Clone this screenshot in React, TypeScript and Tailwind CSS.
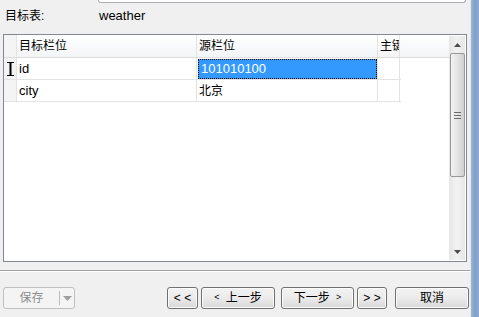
const cjk = { fontFamily: '"Liberation Sans", "Noto Sans CJK SC", sans-serif' };

function Btn({ children, className = '' }: { children: React.ReactNode; className?: string }) {
    return (
        <div
            className={`h-[22px] flex items-center justify-center rounded-[3px] border border-[#707070] bg-gradient-to-b from-[#f2f2f2] via-[#ebebeb] to-[#d8d8d8] text-[12px] text-black shadow-[inset_0_0_0_1px_#fcfcfc] ${className}`}
        >
            {children}
        </div>
    );
}

function Row({ id, src, first }: { id: string; src: string; first?: boolean }) {
    return (
        <div className="flex h-[22px] border-b border-[#e3e3e3]">
            <div className="w-[13px] bg-[#f4f4f4] border-r border-[#e3e3e3] flex items-center justify-center">
                {first && (
                    <svg width="7" height="14" viewBox="0 0 7 14">
                        <path d="M0 0.5h7M0 13.5h7" stroke="#000" strokeWidth="1" fill="none" />
                        <path d="M3.5 0v14" stroke="#000" strokeWidth="2" />
                    </svg>
                )}
            </div>
            <div className="w-[180px] border-r border-[#e3e3e3] flex items-center pl-[2px] text-[13px]">{id}</div>
            <div className="w-[181px] border-r border-[#e3e3e3] flex items-center">
                {first ? (
                    <div className="ml-px h-[20px] w-[179px] bg-[#3399ff] border border-dotted border-black flex items-center pl-[2px] text-white text-[13px]">
                        {src}
                    </div>
                ) : (
                    <span className="pl-[2px] text-[12px]">{src}</span>
                )}
            </div>
            <div className="w-[22px] border-r border-[#e3e3e3]"></div>
        </div>
    );
}

export default function App() {
    return (
        <div className="w-[479px] h-[317px] bg-[#f0f0f0] flex overflow-hidden" style={cjk}>
            <div className="w-[470px] flex flex-col">
                {/* bottom of the text box above */}
                <div className="ml-[98px] w-[368px] h-[3px] bg-white border border-t-0 border-[#abadb3] rounded-b-[3px]"></div>

                <div className="flex mt-[6px] h-[14px] items-center text-[12px]">
                    <span className="pl-[5px] w-[99px]">目标表:</span>
                    <span className="text-[13px]">weather</span>
                </div>

                {/* mapping grid */}
                <div className="mt-[11px] ml-[3px] w-[464px] h-[228px] border border-[#828790] bg-white flex">
                    <div className="flex-1 flex flex-col">
                        <div className="flex h-[23px] bg-gradient-to-b from-white to-[#f3f4f6] border-b border-[#dcdcdc] text-[12px]">
                            <div className="w-[13px] border-r border-[#e3e3e3] bg-[#f4f4f4]"></div>
                            <div className="w-[180px] border-r border-[#e3e3e3] flex items-center pl-[2px]">目标栏位</div>
                            <div className="w-[181px] border-r border-[#e3e3e3] flex items-center pl-[2px]">源栏位</div>
                            <div className="w-[22px] border-r border-[#e3e3e3] flex items-center pl-[2px] overflow-hidden whitespace-nowrap">主键</div>
                        </div>
                        <div className="w-[397px]">
                            <Row id="id" src="101010100" first />
                            <Row id="city" src="北京" />
                        </div>
                    </div>
                    {/* vertical scrollbar */}
                    <div className="w-[16px] my-px mr-px bg-gradient-to-r from-[#e6e6e6] via-[#f2f2f2] to-[#e6e6e6] flex flex-col items-center">
                        <div className="h-[17px] flex items-center justify-center">
                            <svg width="7" height="4" viewBox="0 0 7 4"><path d="M3.5 0L7 4H0z" fill="#4d4d4d" /></svg>
                        </div>
                        <div className="w-[15px] h-[124px] rounded-[2px] border border-[#979797] bg-gradient-to-r from-[#f3f3f3] via-[#e4e4e4] to-[#cfcfcf] flex items-center justify-center">
                            <svg width="7" height="7" viewBox="0 0 7 7">
                                <path d="M0 0.5h7M0 3.5h7M0 6.5h7" stroke="#6b6b6b" strokeWidth="1" />
                            </svg>
                        </div>
                        <div className="flex-1"></div>
                        <div className="h-[17px] flex items-center justify-center">
                            <svg width="7" height="4" viewBox="0 0 7 4"><path d="M0 0H7L3.5 4z" fill="#4d4d4d" /></svg>
                        </div>
                    </div>
                </div>

                <div className="mt-[8px] border-t border-[#a0a0a0] border-b border-b-white"></div>

                {/* buttons */}
                <div className="mt-[15px] flex items-center">
                    <div className="ml-[3px] w-[72px] h-[22px] flex rounded-[3px] border border-[#bfbfbf] bg-[#f4f4f4] text-[12px] text-[#8d8d8d]">
                        <div className="flex-1 flex items-center justify-center">保存</div>
                        <div className="w-px my-[3px] bg-[#bcbcbc]"></div>
                        <div className="w-[14px] flex items-center justify-center">
                            <svg width="9" height="5" viewBox="0 0 9 5"><path d="M0 0H9L4.5 5z" fill="#a0a0a0" /></svg>
                        </div>
                    </div>
                    <Btn className="ml-[92px] w-[31px] text-[9px]">&lt; &lt;</Btn>
                    <Btn className="ml-[3px] w-[74px]">
                        <span className="text-[9px] mr-[6px]">&lt;</span>上一步
                    </Btn>
                    <Btn className="ml-[6px] w-[73px]">
                        下一步<span className="text-[9px] ml-[6px]">&gt;</span>
                    </Btn>
                    <Btn className="ml-[3px] w-[30px] text-[9px]">&gt; &gt;</Btn>
                    <Btn className="ml-[8px] w-[74px]">取消</Btn>
                </div>
            </div>
            <div className="w-[1px] bg-[#dfe6ee]"></div>
            <div className="w-[8px] bg-gradient-to-r from-[#9fb8d4] via-[#7f9fc4] to-[#8eaad0]"></div>
        </div>
    );
}
